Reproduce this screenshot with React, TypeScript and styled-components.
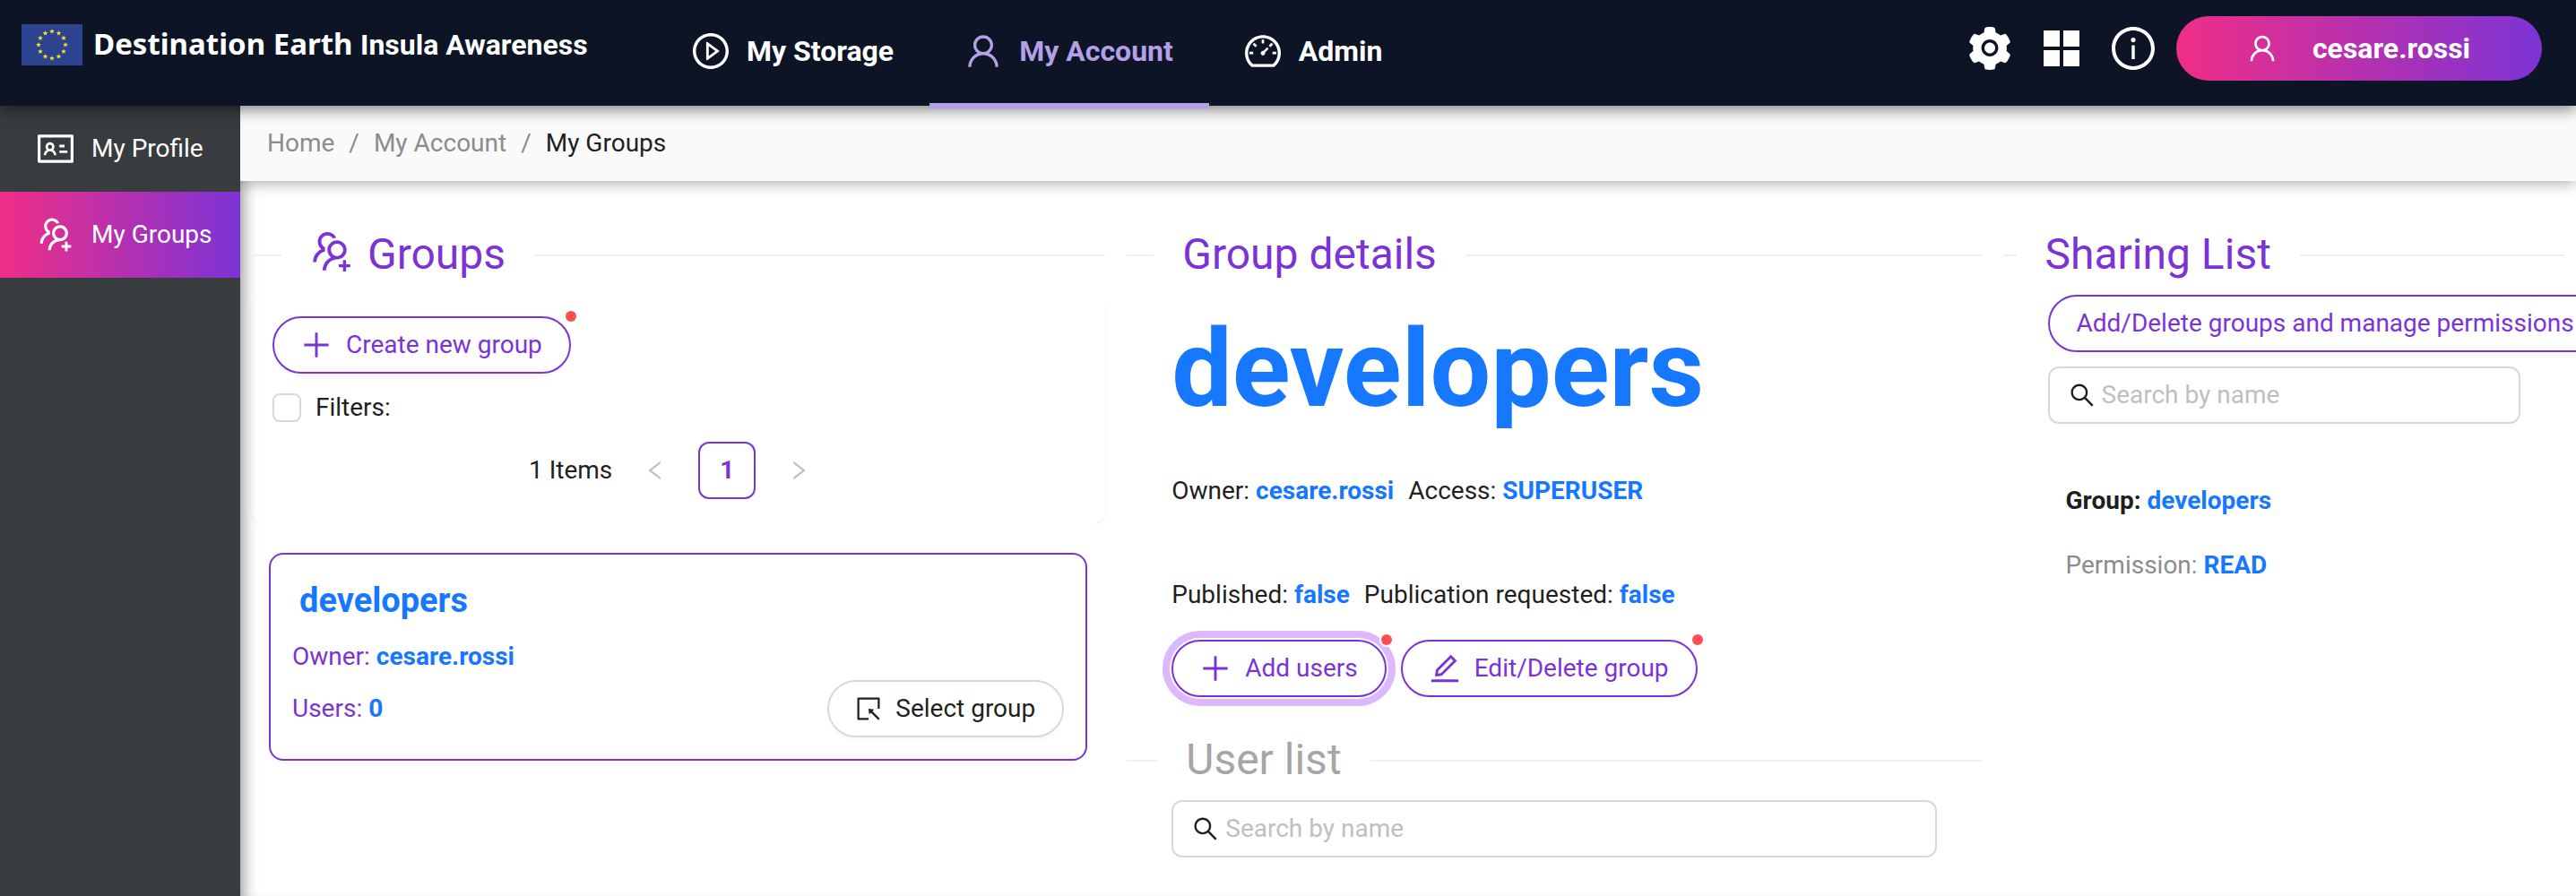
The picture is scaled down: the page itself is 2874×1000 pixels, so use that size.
import React from "react";
import styled, { createGlobalStyle } from "styled-components";
import type { IconType } from "react-icons";
import {
  AiOutlineUser,
  AiOutlinePlayCircle,
  AiOutlineDashboard,
  AiFillSetting,
  AiOutlineInfoCircle,
  AiOutlineIdcard,
  AiOutlineUsergroupAdd,
  AiOutlinePlus,
  AiOutlineLeft,
  AiOutlineRight,
  AiOutlineSelect,
  AiOutlineEdit,
  AiOutlineSearch,
} from "react-icons/ai";

const PURPLE = "#7c33d6";
const BLUE = "#1677ff";
const INK = "#1f1f1f";
const FADE = "linear-gradient(90deg, #f02e87 0%, #7c33d6 100%)";

const Global = createGlobalStyle`
  *, *::before, *::after { box-sizing: border-box; }
  body { margin: 0; background: #fff; color: ${INK}; font: 28px/44px Roboto, "Liberation Sans", sans-serif; }
  button, input { font: inherit; color: inherit; }
  button { cursor: pointer; }
  a { color: inherit; text-decoration: none; }
  h1, h2, h3, p, ul, ol { margin: 0; padding: 0; font-weight: inherit; font-size: inherit; }
  svg { display: block; flex: none; }
`;

const Page = styled.div`
  display: flex;
  flex-direction: column;
  min-height: 100vh;
  overflow: hidden;
`;

const Header = styled.header`
  position: relative;
  z-index: 2;
  display: flex;
  align-items: flex-start;
  height: 118px;
  background: #0d1425;
  color: #fff;
  box-shadow: 0 4px 16px rgba(0, 0, 0, 0.5);
`;

const Brand = styled.a`
  display: flex;
  align-items: center;
  width: 733px;
  padding: 26px 0 0 24px;
  gap: 12px;
`;

const BrandText = styled.span`
  font: 700 33px/46px "Noto Sans", "Open Sans", sans-serif;
  white-space: nowrap;
  span { font: 700 32px/46px Roboto, sans-serif; }
`;

const Nav = styled.nav`
  display: flex;
  flex: 1;
`;

const NavLink = styled.a<{ $active?: boolean }>`
  display: flex;
  align-items: center;
  gap: 20px;
  height: 121px;
  padding: 0 40px 2px;
  font-size: 32px;
  font-weight: 700;
  color: ${(p) => (p.$active ? "#b3a0e6" : "#fff")};
  border-bottom: 6px solid ${(p) => (p.$active ? "#b3a0e6" : "transparent")};
`;

const Tools = styled.div`
  display: flex;
  align-items: center;
  gap: 24px;
  padding: 18px 38px 0 0;
`;

const ToolGroup = styled.div`
  display: flex;
  gap: 32px;
`;

const ToolButton = styled.button`
  display: grid;
  place-items: center;
  width: 48px;
  height: 56px;
  padding: 0;
  border: 0;
  background: none;
  color: #fff;
`;

const Account = styled.button`
  display: flex;
  align-items: center;
  justify-content: center;
  gap: 40px;
  width: 408px;
  height: 72px;
  border: 0;
  border-radius: 36px;
  background: ${FADE};
  color: #fff;
  font-size: 32px;
  font-weight: 700;
`;

const Body = styled.div`
  display: flex;
  flex: 1;
`;

const Sidebar = styled.nav`
  position: relative;
  z-index: 1;
  flex: none;
  width: 268px;
  background: #383c3f;
  color: #fff;
`;

const SideLink = styled.a<{ $active?: boolean }>`
  display: flex;
  align-items: center;
  gap: 20px;
  height: 96px;
  padding-left: 42px;
  background: ${(p) => (p.$active ? FADE : "none")};
`;

const Main = styled.main`
  flex: 1;
  min-width: 0;
  box-shadow: inset 16px 0 16px -12px rgba(0, 0, 0, 0.4);
`;

const Crumbs = styled.nav`
  height: 84px;
  padding: 20px 30px;
  background: #fafafa;
  box-shadow: 0 2px 16px rgba(0, 0, 0, 0.35);
  color: #8c8c8c;
  ol { display: flex; gap: 16px; list-style: none; }
  li { display: flex; gap: 16px; }
  li:not(:last-child)::after { content: "/"; }
  li:last-child { color: ${INK}; }
`;

const Columns = styled.div`
  display: grid;
  grid-template-columns: 3fr 3fr 2fr;
  padding-top: 39px;
`;

const Column = styled.section`
  min-width: 0;
  padding: 0 12px;
`;

const Divider = styled.div<{ $lead: number; $muted?: boolean }>`
  display: flex;
  align-items: center;
  height: 88px;
  gap: 32px;
  color: ${(p) => (p.$muted ? "#a6a6a6" : PURPLE)};
  font-size: 48px;
  line-height: 64px;
  white-space: nowrap;
  &::before, &::after { content: ""; height: 2px; background: #f0f0f0; }
  &::before { width: ${(p) => p.$lead}px; }
  &::after { flex: 1; }
  h2 { display: flex; align-items: center; gap: 16px; padding-bottom: 2px; }
  h2 svg { margin-bottom: 6px; }
`;

const Pill = styled.button<{ $plain?: boolean; $focused?: boolean }>`
  position: relative;
  display: inline-flex;
  align-items: center;
  gap: 16px;
  height: 64px;
  padding: 0 30px;
  border: 2px solid ${(p) => (p.$plain ? "#d9d9d9" : PURPLE)};
  border-radius: 32px;
  background: #fff;
  color: ${(p) => (p.$plain ? INK : PURPLE)};
  white-space: nowrap;
  box-shadow: 0 4px 0 rgba(0, 0, 0, 0.02);
  outline: ${(p) => (p.$focused ? "8px solid #deb8ff" : "none")};
  outline-offset: 2px;
`;

const Dot = styled.span`
  position: absolute;
  top: -6px;
  right: -6px;
  width: 12px;
  height: 12px;
  border-radius: 50%;
  background: #ff4d4f;
  box-shadow: 0 0 0 2px #fff;
`;

const DotAnchor = styled.span`
  position: relative;
  z-index: 1;
  display: inline-flex;
`;

const FilterCard = styled.div`
  display: flex;
  flex-direction: column;
  align-items: flex-start;
  height: 256px;
  padding: 24px;
  border-radius: 16px;
  box-shadow: 0 2px 4px rgba(0, 0, 0, 0.05);
  clip-path: inset(-4px -4px 0 -4px);
`;

const Check = styled.label`
  display: flex;
  align-items: center;
  gap: 16px;
  margin: 16px 0;
  input {
    appearance: none;
    width: 32px;
    height: 32px;
    margin: 0;
    border: 2px solid #d9d9d9;
    border-radius: 8px;
    background: #fff;
  }
`;

const Pager = styled.div`
  display: flex;
  align-items: center;
  align-self: center;
  gap: 16px;
`;

const PageButton = styled.button<{ $current?: boolean }>`
  display: grid;
  place-items: center;
  width: 64px;
  height: 64px;
  padding: 0;
  border: 2px solid ${(p) => (p.$current ? PURPLE : "transparent")};
  border-radius: 12px;
  background: #fff;
  color: ${(p) => (p.$current ? PURPLE : "#bfbfbf")};
  font-weight: 700;
`;

const GroupCard = styled.article`
  display: flex;
  justify-content: space-between;
  align-items: flex-end;
  margin: 32px 20px 0;
  padding: 24px;
  border: 2px solid ${PURPLE};
  border-radius: 16px;
  color: ${PURPLE};
  h3 { padding-left: 8px; font-size: 38px; font-weight: 700; line-height: 54px; color: ${BLUE}; }
`;

const Lines = styled.div`
  display: flex;
  flex-direction: column;
  gap: 14px;
  padding-bottom: 10px;
`;

const Value = styled.strong`
  color: ${BLUE};
  font-weight: 700;
`;

const Details = styled.div`
  display: flex;
  flex-direction: column;
  padding: 0 50px;
`;

const Title = styled.h1`
  && { font-size: 120px; font-weight: 700; line-height: 148px; padding-top: 9px; margin-bottom: 40px; }
  color: ${BLUE};
`;

const Facts = styled.p`
  display: flex;
  gap: 16px;
  && { margin-bottom: 72px; }
  && + & { margin-bottom: 28px; }
`;

const Actions = styled.div`
  display: flex;
  gap: 16px;
  margin-bottom: 27px;
`;

const SearchBox = styled.label`
  display: flex;
  align-items: center;
  gap: 8px;
  height: 64px;
  padding: 0 22px;
  border: 2px solid #d9d9d9;
  border-radius: 12px;
  input {
    flex: 1;
    min-width: 0;
    height: 44px;
    padding: 0;
    border: 0;
    outline: 0;
    background: none;
  }
  input::placeholder { color: #bfbfbf; opacity: 1; }
`;

const Sharing = styled.div`
  display: flex;
  flex-direction: column;
  align-items: stretch;
  gap: 16px;
  padding: 0 50px;
  ${Pill} { align-self: flex-start; }
`;

const Share = styled.div`
  display: flex;
  flex-direction: column;
  gap: 28px;
  padding: 48px 20px;
  p:first-child { font-weight: 700; }
  p + p { color: #8c8c8c; }
`;

/* Trims the empty margin that the icon set leaves round each glyph. */
const Icon = ({ as: Glyph, size }: { as: IconType; size: number }) => (
  <Glyph size={size} viewBox="64 64 896 896" aria-hidden="true" />
);

const starPoints = (cx: number, cy: number) =>
  Array.from({ length: 10 }, (_, i) => {
    const r = i % 2 ? 1.3 : 3;
    const a = (Math.PI / 5) * i - Math.PI / 2;
    return `${cx + r * Math.cos(a)},${cy + r * Math.sin(a)}`;
  }).join(" ");

const Flag = () => (
  <svg width="68" height="46" viewBox="0 0 68 46" aria-hidden="true">
    <rect width="68" height="46" fill="#2c4390" />
    {Array.from({ length: 12 }, (_, i) => (
      <polygon
        key={i}
        fill="#f9e22b"
        points={starPoints(34 + 15 * Math.sin((Math.PI / 6) * i), 23 - 15 * Math.cos((Math.PI / 6) * i))}
      />
    ))}
  </svg>
);

const Tiles = () => (
  <svg width="40" height="40" viewBox="0 0 40 40" fill="#fff" aria-hidden="true">
    <path d="M0 0h18v18H0zM22 0h18v18H22zM0 22h18v18H0zM22 22h18v18H22z" />
  </svg>
);

const Search = ({ id }: { id: string }) => (
  <SearchBox htmlFor={id}>
    <Icon as={AiOutlineSearch} size={28} />
    <input id={id} type="text" placeholder="Search by name" aria-label="Search by name" />
  </SearchBox>
);

export default function App() {
  return (
    <Page>
      <Global />
      <Header>
        <Brand href="#">
          <Flag />
          <BrandText>
            Destination Earth <span>Insula Awareness</span>
          </BrandText>
        </Brand>
        <Nav>
          <NavLink href="#storage"><Icon as={AiOutlinePlayCircle} size={40} />My Storage</NavLink>
          <NavLink href="#account" $active><Icon as={AiOutlineUser} size={40} />My Account</NavLink>
          <NavLink href="#admin"><Icon as={AiOutlineDashboard} size={40} />Admin</NavLink>
        </Nav>
        <Tools>
          <ToolGroup>
            <ToolButton aria-label="Settings"><Icon as={AiFillSetting} size={48} /></ToolButton>
            <ToolButton aria-label="Apps"><Tiles /></ToolButton>
            <ToolButton aria-label="Info"><Icon as={AiOutlineInfoCircle} size={48} /></ToolButton>
          </ToolGroup>
          <Account><Icon as={AiOutlineUser} size={32} />cesare.rossi</Account>
        </Tools>
      </Header>
      <Body>
        <Sidebar>
          <SideLink href="#profile"><Icon as={AiOutlineIdcard} size={40} />My Profile</SideLink>
          <SideLink href="#groups" $active><Icon as={AiOutlineUsergroupAdd} size={40} />My Groups</SideLink>
        </Sidebar>
        <Main>
          <Crumbs aria-label="Breadcrumb">
            <ol>
              <li><a href="#home">Home</a></li>
              <li><a href="#account">My Account</a></li>
              <li>My Groups</li>
            </ol>
          </Crumbs>
          <Columns>
            <Column>
              <Divider $lead={34}>
                <h2><Icon as={AiOutlineUsergroupAdd} size={48} />Groups</h2>
              </Divider>
              <FilterCard>
                <DotAnchor>
                  <Pill><Icon as={AiOutlinePlus} size={34} />Create new group</Pill>
                  <Dot />
                </DotAnchor>
                <Check><input type="checkbox" />Filters:</Check>
                <Pager>
                  <span>1 Items</span>
                  <PageButton aria-label="Previous page"><Icon as={AiOutlineLeft} size={24} /></PageButton>
                  <PageButton $current>1</PageButton>
                  <PageButton aria-label="Next page"><Icon as={AiOutlineRight} size={24} /></PageButton>
                </Pager>
              </FilterCard>
              <GroupCard>
                <Lines>
                  <h3>developers</h3>
                  <p>Owner: <Value>cesare.rossi</Value></p>
                  <p>Users: <Value>0</Value></p>
                </Lines>
                <Pill $plain><Icon as={AiOutlineSelect} size={28} />Select group</Pill>
              </GroupCard>
            </Column>
            <Column>
              <Divider $lead={30}><h2>Group details</h2></Divider>
              <Details>
                <Title>developers</Title>
                <Facts>
                  <span>Owner: <Value>cesare.rossi</Value></span>
                  <span>Access: <Value>SUPERUSER</Value></span>
                </Facts>
                <Facts>
                  <span>Published: <Value>false</Value></span>
                  <span>Publication requested: <Value>false</Value></span>
                </Facts>
                <Actions>
                  <DotAnchor>
                    <Pill $focused><Icon as={AiOutlinePlus} size={34} />Add users</Pill>
                    <Dot />
                  </DotAnchor>
                  <DotAnchor>
                    <Pill><Icon as={AiOutlineEdit} size={34} />Edit/Delete group</Pill>
                    <Dot />
                  </DotAnchor>
                </Actions>
              </Details>
              <Divider $lead={34} $muted><h2>User list</h2></Divider>
              <Details><Search id="user-search" /></Details>
            </Column>
            <Column>
              <Divider $lead={15}><h2>Sharing List</h2></Divider>
              <Sharing>
                <Pill>Add/Delete groups and manage permissions</Pill>
                <Search id="share-search" />
                <Share>
                  <p>Group: <Value>developers</Value></p>
                  <p>Permission: <Value>READ</Value></p>
                </Share>
              </Sharing>
            </Column>
          </Columns>
        </Main>
      </Body>
    </Page>
  );
}
